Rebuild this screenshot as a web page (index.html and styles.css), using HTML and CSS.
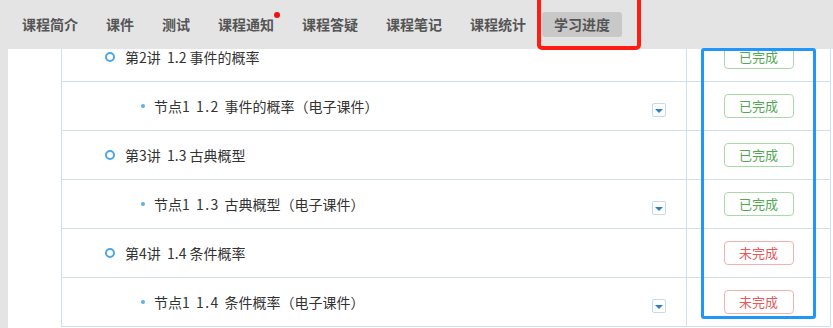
FILE: index.html
```html
<!DOCTYPE html>
<html lang="zh-CN">
<head>
    <meta charset="UTF-8">
    <meta name="viewport" content="width=device-width, initial-scale=1.0">
    <title>学习进度</title>
    <link rel="stylesheet" href="styles.css">
</head>
<body>
    <div class="tabs">
        <span class="tab">课程简介</span>
        <span class="tab">课件</span>
        <span class="tab">测试</span>
        <span class="tab">课程通知<i class="dot"></i></span>
        <span class="tab">课程答疑</span>
        <span class="tab">课程笔记</span>
        <span class="tab">课程统计</span>
        <span class="tab active">学习进度</span>
    </div>

    <div class="main">
        <div class="table">
            <div class="row">
                <div class="cell chapter"><i class="ring"></i><span>第2讲  1.2 事件的概率</span></div>
                <div class="cell status"><span class="badge done">已完成</span></div>
            </div>
            <div class="row">
                <div class="cell node"><i class="bullet"></i><span>节点<span class="num">1 1.2 </span>事件的概率（电子课件）</span><i class="drop"></i></div>
                <div class="cell status"><span class="badge done">已完成</span></div>
            </div>
            <div class="row">
                <div class="cell chapter"><i class="ring"></i><span>第3讲  1.3 古典概型</span></div>
                <div class="cell status"><span class="badge done">已完成</span></div>
            </div>
            <div class="row">
                <div class="cell node"><i class="bullet"></i><span>节点<span class="num">1 1.3 </span>古典概型（电子课件）</span><i class="drop"></i></div>
                <div class="cell status"><span class="badge done">已完成</span></div>
            </div>
            <div class="row">
                <div class="cell chapter"><i class="ring"></i><span>第4讲  1.4 条件概率</span></div>
                <div class="cell status"><span class="badge todo">未完成</span></div>
            </div>
            <div class="row">
                <div class="cell node"><i class="bullet"></i><span>节点<span class="num">1 1.4 </span>条件概率（电子课件）</span><i class="drop"></i></div>
                <div class="cell status"><span class="badge todo">未完成</span></div>
            </div>
        </div>
    </div>

    <!-- annotation marks drawn over the screenshot -->
    <div class="mark-red"></div>
    <div class="mark-blue"></div>
</body>
</html>
```

FILE: styles.css
```css
body {
    font-family: "Noto Sans CJK SC", "Noto Sans", sans-serif;
    background-color: #e4e4e4;
    color: #333;
    margin: 0;
    height: 328px;
    overflow: hidden;
    position: relative;
}
.tabs {
    display: flex;
    align-items: center;
    height: 49px;
    padding-left: 10px;
}
.tab {
    position: relative;
    height: 25px;
    line-height: 25px;
    padding: 0 12px;
    margin-right: 4px;
    font-size: 14px;
    font-weight: bold;
    color: #555;
    border-radius: 3px;
}
.tab.active {
    background-color: #c8c8c8;
}
.dot {
    position: absolute;
    top: 0;
    right: 6px;
    width: 6px;
    height: 6px;
    border-radius: 50%;
    background-color: #f01010;
}
.main {
    margin-left: 8px;
    height: 279px;
    background-color: #fff;
    overflow: hidden;
}
.table {
    margin: -16px 0 0 53px;
    width: 768px;
    border-left: 1px solid #d2e0ea;
    border-right: 1px solid #d2e0ea;
}
.row {
    display: grid;
    grid-template-columns: 624px 1fr;
    height: 49px;
    border-bottom: 1px solid #d2e0ea;
    box-sizing: border-box;
}
.cell {
    display: flex;
    align-items: center;
    font-size: 14px;
    line-height: 16px;
    white-space: pre;
}
.chapter {
    padding-left: 43px;
}
.ring {
    width: 10px;
    height: 10px;
    border: 2.5px solid #4ea6e6;
    border-radius: 50%;
    box-sizing: border-box;
    margin-right: 10px;
}
.node {
    padding-left: 79px;
}
.num {
    letter-spacing: 1.5px;
}
.bullet {
    width: 4px;
    height: 4px;
    border-radius: 50%;
    background-color: #5cb0ea;
    margin-right: 9px;
}
.drop {
    margin: 7px 20px 0 auto;
    width: 14px;
    height: 14px;
    border: 1px solid #c6dbea;
    border-radius: 2px;
    box-sizing: border-box;
    display: flex;
    align-items: center;
    justify-content: center;
}
.drop::after {
    content: "";
    margin-top: 2px;
    border-left: 4px solid transparent;
    border-right: 4px solid transparent;
    border-top: 4px solid #2a82c6;
}
.status {
    justify-content: center;
    border-left: 1px solid #d2e0ea;
}
.badge {
    width: 70px;
    height: 24px;
    line-height: 22px;
    text-align: center;
    font-size: 13px;
    border-radius: 4px;
    box-sizing: border-box;
}
.badge.done {
    color: #52a852;
    border: 1px solid #a9d9a9;
}
.badge.todo {
    color: #e85858;
    border: 1px solid #f6b0b0;
}
.mark-red {
    position: absolute;
    left: 537px;
    top: -6px;
    width: 104px;
    height: 56px;
    border: 4px solid #ff1c12;
    border-radius: 5px;
    box-sizing: border-box;
}
.mark-blue {
    position: absolute;
    left: 701px;
    top: 48px;
    width: 115px;
    height: 271px;
    border: 3px solid #1e96fa;
    border-radius: 3px;
    box-sizing: border-box;
}
```
